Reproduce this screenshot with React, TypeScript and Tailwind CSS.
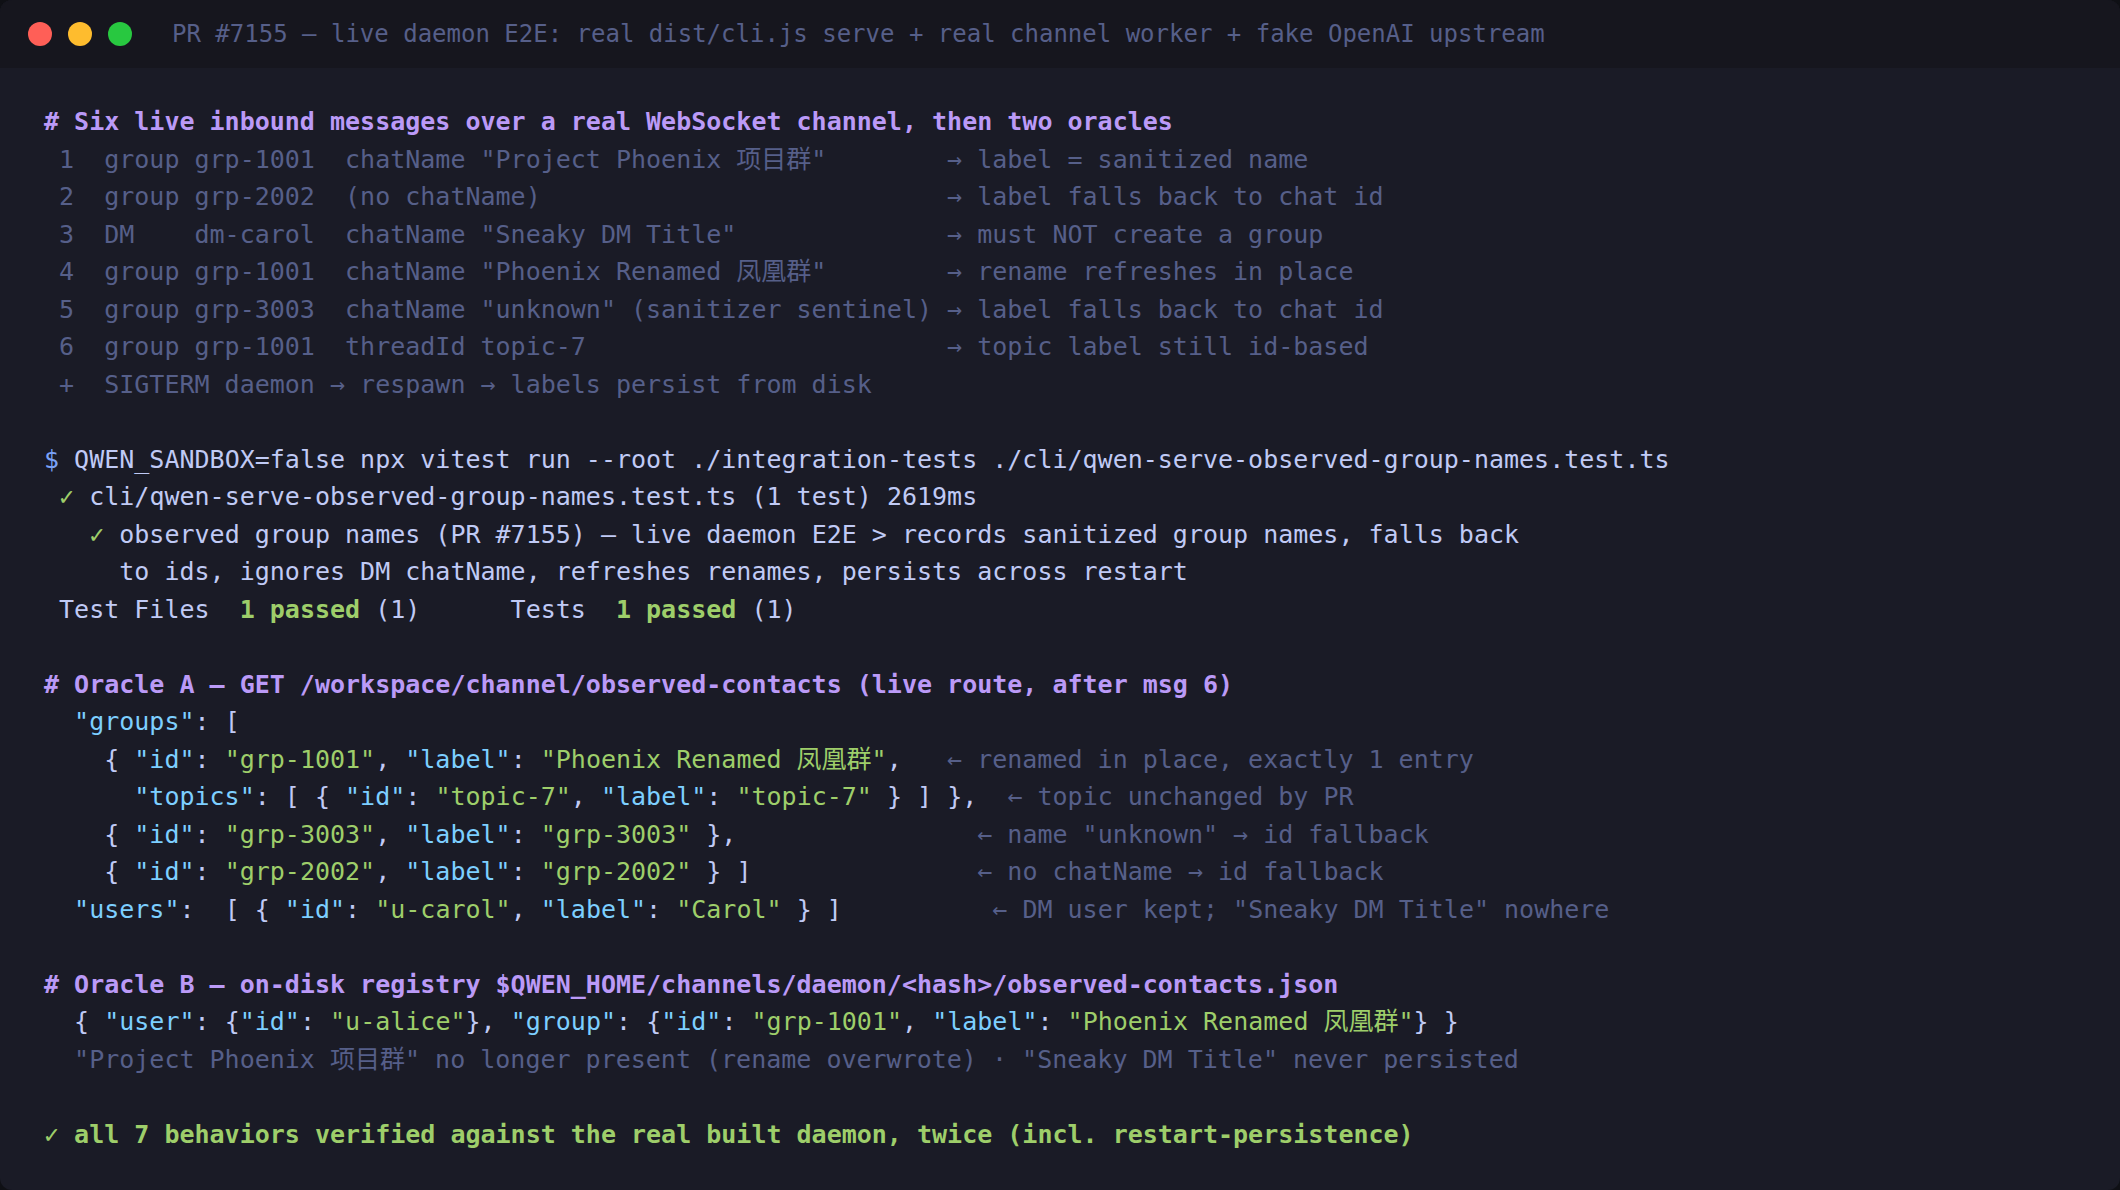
import React from 'react'

const mono = '[font-family:"DejaVu_Sans_Mono","Noto_Sans_CJK_SC",monospace]'

const K = ({ children }: { children: React.ReactNode }) => <span className="text-[#7dcfff]">{children}</span>
const S = ({ children }: { children: React.ReactNode }) => <span className="text-[#9ece6a]">{children}</span>
const C = ({ children }: { children: React.ReactNode }) => <span className="text-[#565f89]">{children}</span>
const G = ({ children }: { children: React.ReactNode }) => <span className="text-[#9ece6a]">{children}</span>

const Line = ({ children, className = '' }: { children?: React.ReactNode; className?: string }) => (
  <div className={`h-[37.5px] whitespace-pre ${className}`}>{children}</div>
)

const Col = ({ children }: { children: React.ReactNode }) => (
  <span className="inline-block w-[60ch] whitespace-pre">{children}</span>
)

const steps = [
  [' 1  group grp-1001  chatName "Project Phoenix 项目群"', '→ label = sanitized name'],
  [' 2  group grp-2002  (no chatName)', '→ label falls back to chat id'],
  [' 3  DM    dm-carol  chatName "Sneaky DM Title"', '→ must NOT create a group'],
  [' 4  group grp-1001  chatName "Phoenix Renamed 凤凰群"', '→ rename refreshes in place'],
  [' 5  group grp-3003  chatName "unknown" (sanitizer sentinel)', '→ label falls back to chat id'],
  [' 6  group grp-1001  threadId topic-7', '→ topic label still id-based'],
]

export default function App() {
  return (
    <div className="h-screen w-screen bg-[#0f1015]">
      <div className={`flex h-full w-full flex-col overflow-hidden rounded-[12px] bg-[#1a1b26] ${mono}`}>
        <div className="flex h-[68px] shrink-0 items-center bg-[#16161e] pl-[28px]">
          <div className="flex gap-[16px]">
            <span className="h-[24px] w-[24px] rounded-full bg-[#ff5f57]" />
            <span className="h-[24px] w-[24px] rounded-full bg-[#febc2e]" />
            <span className="h-[24px] w-[24px] rounded-full bg-[#28c840]" />
          </div>
          <div className="ml-[40px] whitespace-pre text-[24px] text-[#565f89]">
            PR #7155 — live daemon E2E: real dist/cli.js serve + real channel worker + fake OpenAI upstream
          </div>
        </div>

        <div className="px-[44px] pt-[35px] text-[25px] leading-[37.5px] text-[#c0caf5]">
          <Line className="font-bold text-[#bb9af7]">
            # Six live inbound messages over a real WebSocket channel, then two oracles
          </Line>
          {steps.map(([left, right]) => (
            <Line key={left} className="text-[#565f89]">
              <Col>{left}</Col>
              {right}
            </Line>
          ))}
          <Line className="text-[#565f89]">{' +  SIGTERM daemon → respawn → labels persist from disk'}</Line>
          <Line />

          <Line>
            <span className="text-[#7aa2f7]">$</span>
            {' QWEN_SANDBOX=false npx vitest run --root ./integration-tests ./cli/qwen-serve-observed-group-names.test.ts'}
          </Line>
          <Line>
            {' '}
            <G>✓</G>
            {' cli/qwen-serve-observed-group-names.test.ts (1 test) 2619ms'}
          </Line>
          <Line>
            {'   '}
            <G>✓</G>
            {' observed group names (PR #7155) — live daemon E2E > records sanitized group names, falls back'}
          </Line>
          <Line>{'     to ids, ignores DM chatName, refreshes renames, persists across restart'}</Line>
          <Line>
            {' Test Files  '}
            <span className="font-bold text-[#9ece6a]">1 passed</span>
            {' (1)      Tests  '}
            <span className="font-bold text-[#9ece6a]">1 passed</span>
            {' (1)'}
          </Line>
          <Line />

          <Line className="font-bold text-[#bb9af7]">
            # Oracle A — GET /workspace/channel/observed-contacts (live route, after msg 6)
          </Line>
          <Line>
            {'  '}
            <K>"groups"</K>: [
          </Line>
          <Line>
            <Col>
              {'    { '}
              <K>"id"</K>: <S>"grp-1001"</S>, <K>"label"</K>: <S>"Phoenix Renamed 凤凰群"</S>,
            </Col>
            <C>← renamed in place, exactly 1 entry</C>
          </Line>
          <Line>
            {'      '}
            <K>"topics"</K>: [ {'{ '}
            <K>"id"</K>: <S>"topic-7"</S>, <K>"label"</K>: <S>"topic-7"</S> {'} ] },  '}
            <C>← topic unchanged by PR</C>
          </Line>
          <Line>
            {'    { '}
            <K>"id"</K>: <S>"grp-3003"</S>, <K>"label"</K>: <S>"grp-3003"</S>
            {' },                '}
            <C>← name "unknown" → id fallback</C>
          </Line>
          <Line>
            {'    { '}
            <K>"id"</K>: <S>"grp-2002"</S>, <K>"label"</K>: <S>"grp-2002"</S>
            {' } ]               '}
            <C>← no chatName → id fallback</C>
          </Line>
          <Line>
            {'  '}
            <K>"users"</K>:{'  [ { '}
            <K>"id"</K>: <S>"u-carol"</S>, <K>"label"</K>: <S>"Carol"</S>
            {' } ]          '}
            <C>← DM user kept; "Sneaky DM Title" nowhere</C>
          </Line>
          <Line />

          <Line className="font-bold text-[#bb9af7]">
            # Oracle B — on-disk registry $QWEN_HOME/channels/daemon/&lt;hash&gt;/observed-contacts.json
          </Line>
          <Line>
            {'  { '}
            <K>"user"</K>: {'{'}
            <K>"id"</K>: <S>"u-alice"</S>
            {'}, '}
            <K>"group"</K>: {'{'}
            <K>"id"</K>: <S>"grp-1001"</S>, <K>"label"</K>: <S>"Phoenix Renamed 凤凰群"</S>
            {'} }'}
          </Line>
          <Line className="text-[#565f89]">
            {'  "Project Phoenix 项目群" no longer present (rename overwrote) · "Sneaky DM Title" never persisted'}
          </Line>
          <Line />

          <Line className="font-bold text-[#9ece6a]">
            ✓ all 7 behaviors verified against the real built daemon, twice (incl. restart-persistence)
          </Line>
        </div>
      </div>
    </div>
  )
}
